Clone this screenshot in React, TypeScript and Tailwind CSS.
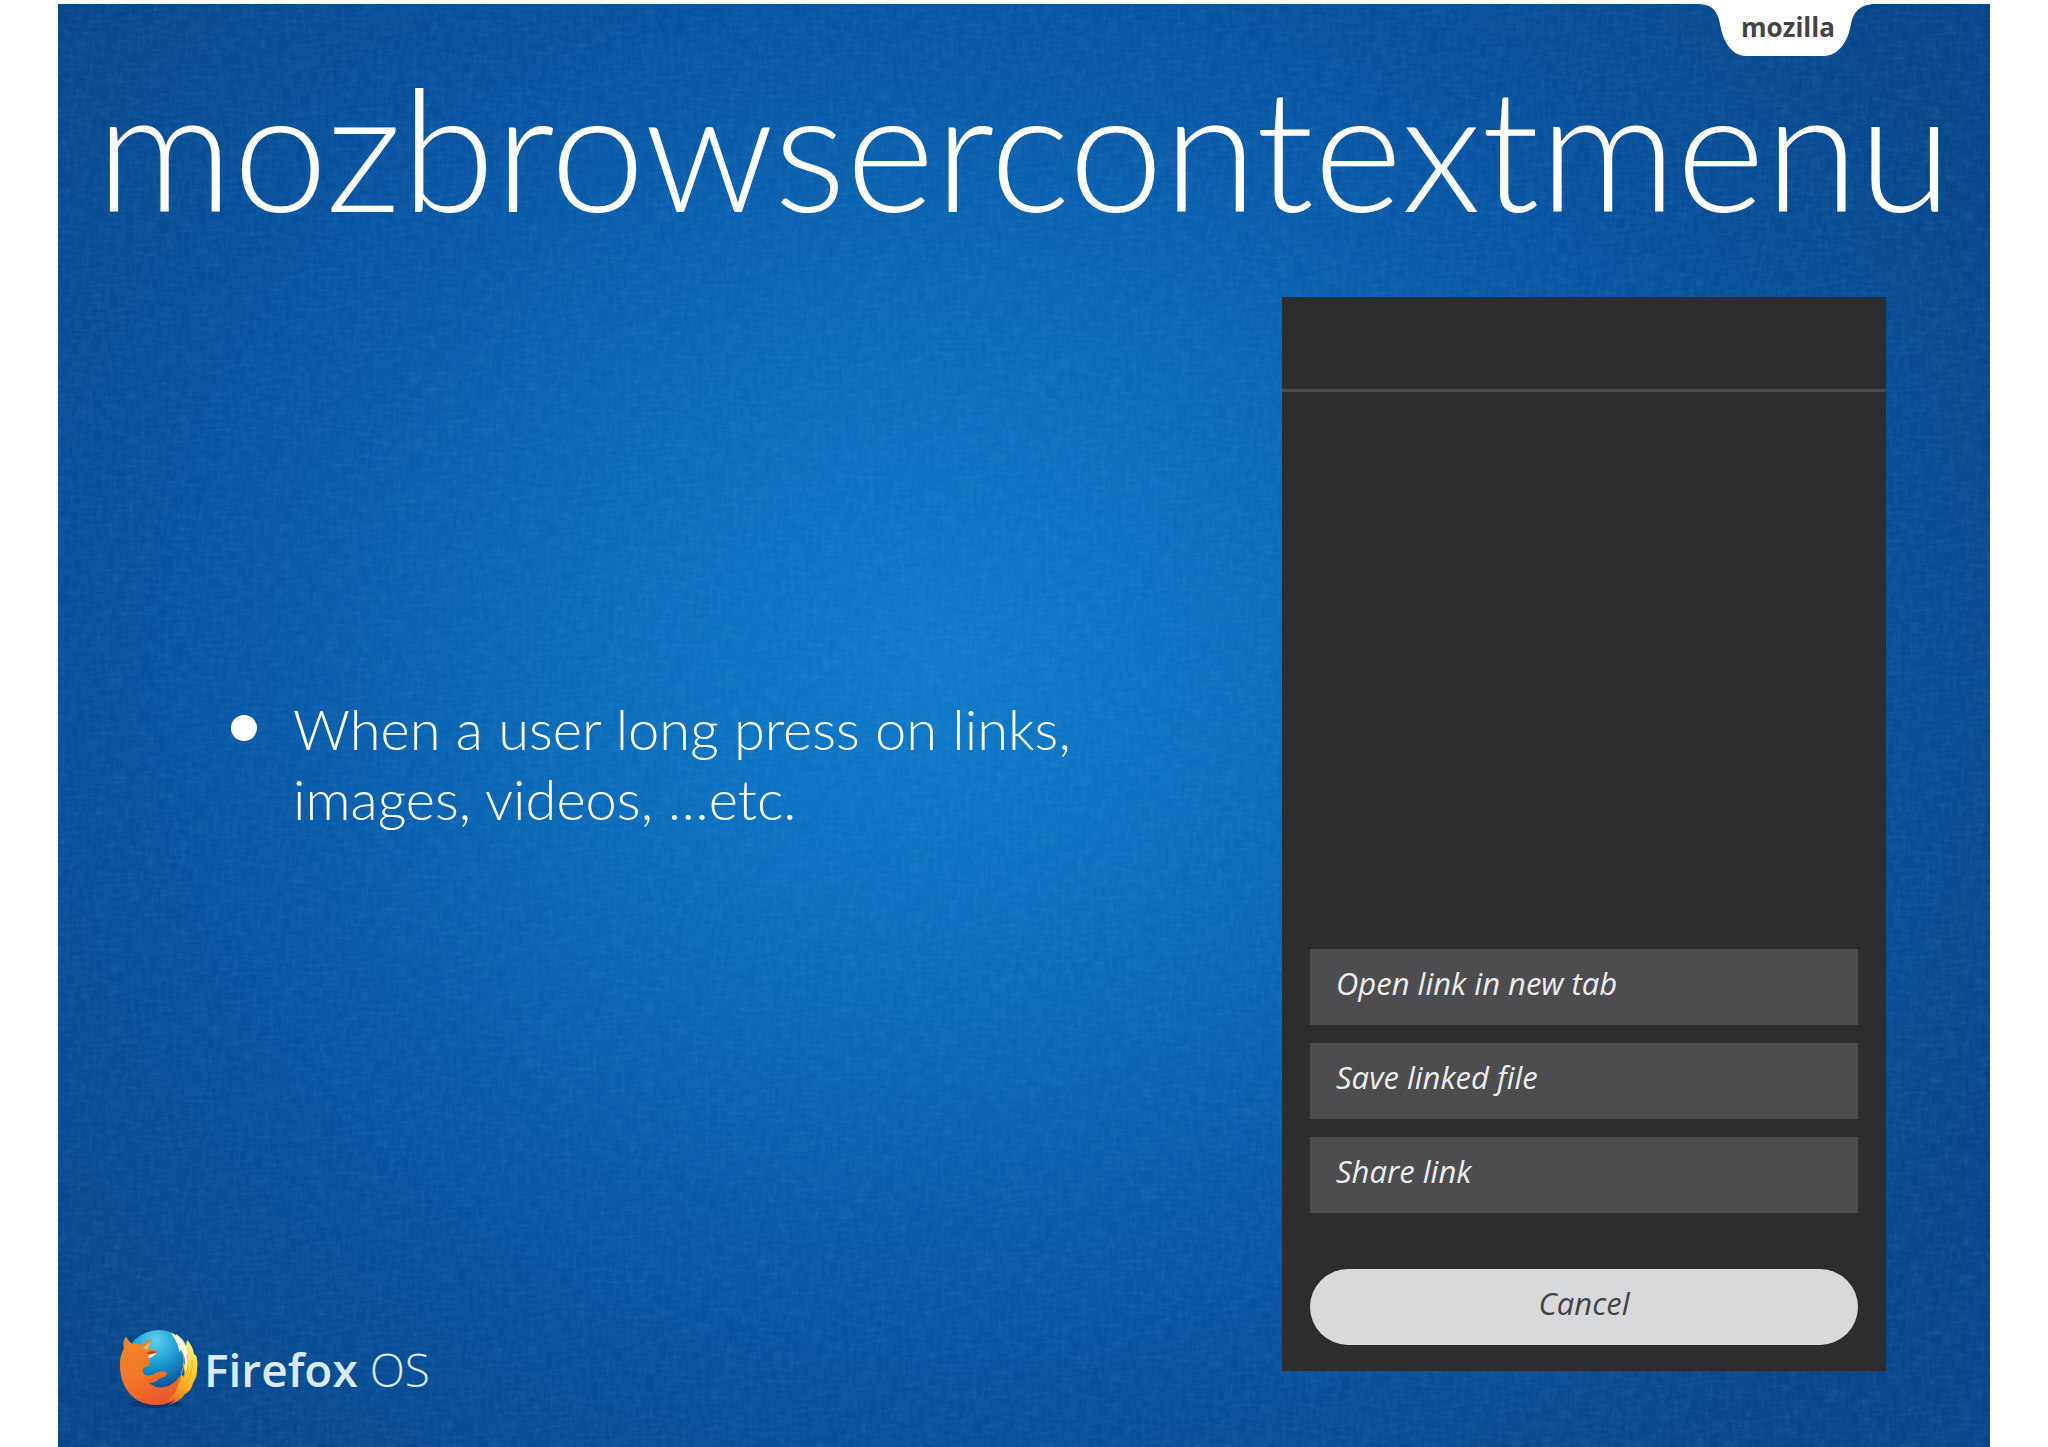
const actions = ["Open link in new tab", "Save linked file", "Share link"];

function FirefoxLogo() {
  return (
    <svg className="h-20 w-20 shrink-0" viewBox="0 0 80 80" aria-hidden="true">
      <defs>
        <radialGradient id="globe" cx="0.45" cy="0.15" r="0.85">
          <stop offset="0" stopColor="#5fd0f0" />
          <stop offset="0.4" stopColor="#1a9bd2" />
          <stop offset="0.75" stopColor="#0c5a9e" />
          <stop offset="1" stopColor="#0a2e66" />
        </radialGradient>
        <linearGradient id="fur" x1="0.1" y1="0" x2="0.5" y2="1">
          <stop offset="0" stopColor="#f0862a" />
          <stop offset="0.5" stopColor="#f27a28" />
          <stop offset="1" stopColor="#e8582a" />
        </linearGradient>
        <linearGradient id="tail" x1="0.5" y1="0" x2="0.3" y2="1">
          <stop offset="0" stopColor="#fff0a0" />
          <stop offset="0.35" stopColor="#ffdc3c" />
          <stop offset="0.7" stopColor="#fbab1f" />
          <stop offset="1" stopColor="#ea5f28" />
        </linearGradient>
      </defs>
      <ellipse cx="38" cy="75" rx="27" ry="4" fill="#052f66" opacity="0.6" />
      <circle cx="41" cy="36" r="35" fill="url(#globe)" />
      <path d="M2 36c0-8 2-13 4-17-1-4-1-8 2-11 2 3 4 5 6 7 3-1 7 0 11 1 2-3 5-5 8-6-1 4-1 7-3 10 4 0 8 0 9 3-2 3-5 5-8 6 1 2 1 5 0 8-5 0-8 3-5 8 4 3 8 1 12-1 5-2 11-3 11 1-2 4-6 3-8 5-3 3-6 4-10 4 10 8 22 5 30-6l10-3c-2 19-14 31-33 31C17 76 2 60 2 36z" fill="url(#fur)" />
      <path
        d="M58 5c5 3 8 7 10 12l1-6c4 4 6 8 7 14 2 1 3 3 3 5 1 5 0 8 0 11 0 6-2 10-4 13-1 5-4 9-8 11-4 6-10 9-17 11 4-2 6-4 8-7-3 2-6 3-10 3 5-3 9-7 11-13 2-5 4-9 4-14l3 4c1-6 0-11-1-15l3 2c-1-9-3-16-8-22-1-3-2-5-2-9z"
        fill="url(#tail)"
      />
      <path d="M53 4c8 3 13 9 16 17 3 9 2 16-2 22 1-10 0-17-4-22l-2 2c0-7-4-13-8-19z" fill="#fffbe6" />
      <path d="M63 21c4 7 4 15 0 24M69 26c2 9 1 17-4 25M74 31c1 9-2 18-8 25" fill="none" stroke="#f9a31f" strokeWidth="1" />
      <path d="M25 19c3-3 5-4 7-6-1 4-1 6-3 8z" fill="#ffb552" />
      <path d="M30 27c2-2 5-2 8-3-1 3-4 4-7 5z" fill="#fff3e3" />
      <path d="M29 23c4-1 8-1 10 0-3 2-6 2-9 2z" fill="#b7441c" />
    </svg>
  );
}

function FabricTexture() {
  return (
    <svg className="pointer-events-none absolute inset-0 h-full w-full" aria-hidden="true">
      <defs>
        <filter id="weft" x="0" y="0" width="100%" height="100%">
          <feTurbulence type="fractalNoise" baseFrequency="0.06 0.25" numOctaves="2" seed="4" />
          <feColorMatrix values="0 0 0 0 0.2  0 0 0 0 0.6  0 0 0 0 0.9  0.8 0 0 0 -0.3" />
        </filter>
        <filter id="warp" x="0" y="0" width="100%" height="100%">
          <feTurbulence type="fractalNoise" baseFrequency="0.25 0.06" numOctaves="2" seed="9" />
          <feColorMatrix values="0 0 0 0 0.2  0 0 0 0 0.6  0 0 0 0 0.9  0.8 0 0 0 -0.3" />
        </filter>
      </defs>
      <rect width="100%" height="100%" filter="url(#weft)" opacity="0.18" />
      <rect width="100%" height="100%" filter="url(#warp)" opacity="0.18" />
    </svg>
  );
}

function MozillaTab() {
  return (
    <a
      href="#mozilla"
      className="absolute top-0 right-[114px] flex h-[52px] w-[176px] justify-center font-['Open_Sans'] text-[26px] leading-[46px] font-bold text-[#444444]"
    >
      <svg className="absolute inset-0 h-full w-full" viewBox="0 0 176 52" aria-hidden="true">
        <path d="M0 0c13 1 18 8 20 20 3 18 12 32 26 32h78c14 0 24-14 27-32 2-12 9-19 22-20z" fill="#fff" />
      </svg>
      <span className="relative">mozilla</span>
    </a>
  );
}

export default function App() {
  return (
    <div className="flex min-h-screen bg-white px-[58px] pt-1">
      <div className="relative flex flex-1 flex-col bg-[radial-gradient(ellipse_60%_70%_at_46%_46%,#0f79c8_0%,#0c6cba_30%,#0853a0_68%,#064588_100%)] text-white">
        <FabricTexture />
        <MozillaTab />

        <h1 className="relative pt-[38px] text-center font-['Lato'] text-[170px] leading-[208px] font-light">
          mozbrowsercontextmenu
        </h1>

        <main className="relative flex flex-1 justify-between pt-[47px] pr-[104px] pb-[38px]">
          <div className="flex flex-col justify-between pl-[60px]">
            <ul className="mt-[397px] font-['Lato'] text-[56px] leading-[70px] font-light">
              <li className="flex gap-9 pl-[113px]">
                <span className="mt-[21px] size-[26px] shrink-0 rounded-full bg-white" />
                <span>
                  When a user long press on links,
                  <br />
                  images, videos, …etc.
                </span>
              </li>
            </ul>

            <div className="flex items-center gap-[6px]">
              <FirefoxLogo />
              <p className="font-['Open_Sans'] text-[46px] leading-[64px] text-[#dbe9f8]">
                <span className="font-semibold">Firefox</span> <span className="font-light">OS</span>
              </p>
            </div>
          </div>

          <section
            aria-label="Link actions"
            className="flex h-[1074px] w-[604px] shrink-0 flex-col bg-[#2d2d2f] font-['Open_Sans'] text-[31px] italic"
          >
            <div className="h-[95px] shrink-0 border-b-3 border-[#48484a]" />
            <div className="flex flex-1 flex-col justify-end px-7 pb-[26px]">
              <div className="flex flex-col gap-[18px]">
                {actions.map((label) => (
                  <button key={label} className="h-19 bg-[#4d4d4f] px-[26px] pb-2 text-left text-[#ececec]">
                    {label}
                  </button>
                ))}
              </div>
              <button className="mt-14 h-19 rounded-full bg-[#d8d9db] pb-2 text-[#444446]">Cancel</button>
            </div>
          </section>
        </main>
      </div>
    </div>
  );
}
